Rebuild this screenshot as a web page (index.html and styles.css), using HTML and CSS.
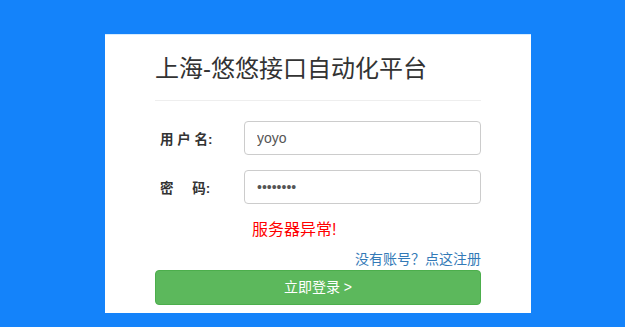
FILE: index.html
```html
<!DOCTYPE html>
<html lang="zh-CN">

<head>
    <meta charset="UTF-8">
    <meta name="viewport" content="width=device-width, initial-scale=1.0">
    <title>登录</title>
    <link rel="stylesheet" href="styles.css">
</head>

<body>
    <div class="login-box">
        <h2 class="title">上海-悠悠接口自动化平台</h2>
        <div class="line"></div>
        <div class="form-row">
            <label class="label">用 户 名:</label>
            <input class="input" type="text" value="yoyo">
        </div>
        <div class="form-row">
            <label class="label">密&nbsp;&nbsp;&nbsp;&nbsp;&nbsp;码:</label>
            <input class="input" type="password" value="12345678">
        </div>
        <div class="error">服务器异常!</div>
        <div class="reg"><a href="#">没有账号？点这注册</a></div>
        <div class="btn">立即登录 &gt;</div>
    </div>
</body>

</html>
```

FILE: styles.css
```css
body {
    margin: 0;
    background: #1483fa;
    font-family: "Liberation Sans", "Noto Sans CJK SC", sans-serif;
}

.login-box {
    width: 426px;
    height: 279px;
    box-sizing: border-box;
    margin: 34px 0 0 105px;
    padding: 0 50px;
    background: #fff;
    border-top: 1px solid #d6ecff;
}

.title {
    margin: 0;
    padding-top: 14px;
    height: 40px;
    line-height: 40px;
    font-size: 24px;
    font-weight: normal;
    color: #333;
    white-space: nowrap;
}

.line {
    margin-top: 11px;
    height: 1px;
    background: #eee;
}

.form-row {
    display: flex;
    align-items: center;
    margin-top: 20px;
}

.form-row + .form-row {
    margin-top: 15px;
}

.label {
    flex: 0 0 89px;
    padding-left: 5px;
    box-sizing: border-box;
    font-size: 13.5px;
    font-weight: bold;
    color: #333;
    white-space: nowrap;
}

.input {
    flex: 1;
    min-width: 0;
    height: 34px;
    box-sizing: border-box;
    padding: 6px 12px;
    border: 1px solid #ccc;
    border-radius: 4px;
    font-size: 14px;
    font-family: inherit;
    color: #555;
}

.error {
    margin-top: 16px;
    padding-left: 97px;
    font-size: 16px;
    line-height: 20px;
    color: #f00;
}

.reg {
    margin-top: 10px;
    text-align: right;
    font-size: 14px;
    line-height: 19px;
}

.reg a {
    color: #337ab7;
    text-decoration: none;
}

.btn {
    margin-top: 1px;
    height: 35px;
    line-height: 33px;
    text-align: center;
    background: #5cb85c;
    border: 1px solid #4cae4c;
    border-radius: 4px;
    box-sizing: border-box;
    color: #fff;
    font-size: 14px;
}
```
